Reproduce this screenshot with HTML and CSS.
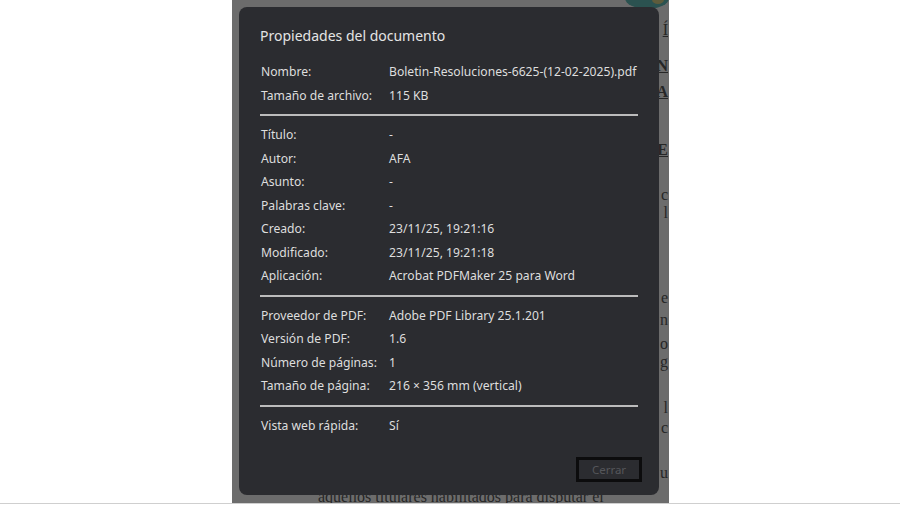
FILE: index.html
```html
<!DOCTYPE html>
<html lang="es">
<head>
<meta charset="utf-8">
<title>Propiedades del documento</title>
<link rel="stylesheet" href="styles.css">
</head>
<body>
<div class="screen">
  <div class="viewer">
    <svg class="logo" width="44" height="12" viewBox="0 0 44 12" aria-hidden="true">
      <ellipse cx="22" cy="-2" rx="22" ry="11" fill="#2b5250"/>
      <ellipse cx="33" cy="0" rx="6" ry="4" fill="#5e5c3c"/>
    </svg>
    <div class="page">
      <div class="ln ul">Í</div>
      <div class="ln ul b">N</div>
      <div class="ln ul b">A</div>
      <div class="ln ul b">E</div>
      <div class="ln">c</div>
      <div class="ln">l</div>
      <div class="ln">e</div>
      <div class="ln">n</div>
      <div class="ln">o</div>
      <div class="ln">g</div>
      <div class="ln">l</div>
      <div class="ln">c</div>
      <div class="ln">u</div>
      <div class="ln full">aquellos titulares habilitados para disputar el</div>
    </div>
    <div class="dialog" role="dialog" aria-label="Propiedades del documento">
      <h1 class="title">Propiedades del documento</h1>
      <dl class="props">
        <dt>Nombre:</dt><dd>Boletin-Resoluciones-6625-(12-02-2025).pdf</dd>
        <dt>Tamaño de archivo:</dt><dd>115 KB</dd>
      </dl>
      <hr class="sep">
      <dl class="props">
        <dt>Título:</dt><dd>-</dd>
        <dt>Autor:</dt><dd>AFA</dd>
        <dt>Asunto:</dt><dd>-</dd>
        <dt>Palabras clave:</dt><dd>-</dd>
        <dt>Creado:</dt><dd>23/11/25, 19:21:16</dd>
        <dt>Modificado:</dt><dd>23/11/25, 19:21:18</dd>
        <dt>Aplicación:</dt><dd>Acrobat PDFMaker 25 para Word</dd>
      </dl>
      <hr class="sep">
      <dl class="props">
        <dt>Proveedor de PDF:</dt><dd>Adobe PDF Library 25.1.201</dd>
        <dt>Versión de PDF:</dt><dd>1.6</dd>
        <dt>Número de páginas:</dt><dd>1</dd>
        <dt>Tamaño de página:</dt><dd>216 × 356 mm (vertical)</dd>
      </dl>
      <hr class="sep">
      <dl class="props">
        <dt>Vista web rápida:</dt><dd>Sí</dd>
      </dl>
      <div class="actions">
        <button class="btn" type="button">Cerrar</button>
      </div>
    </div>
  </div>
  <div class="bottom-rule"></div>
</div>
</body>
</html>
```

FILE: styles.css
```css
html, body {
  margin: 0;
  padding: 0;
  background: #ffffff;
}

.screen {
  width: 900px;
  height: 505px;
  overflow: hidden;
}

.viewer {
  position: relative;
  margin-left: 232px;
  width: 437px;
  height: 503px;
  background: #6c6c6c;
  overflow: hidden;
}

.bottom-rule {
  height: 1px;
  background: #cfcfcf;
}

.logo {
  position: absolute;
  right: 0;
  top: 0;
}

.page {
  display: grid;
  grid-template-rows: 36px 26px 58px 45px 18px 85px 22px 24px 18px 46px 20px 45px 24px 18px;
  padding-top: 21px;
  padding-left: 86px;
  width: 350px;
  font-family: "Liberation Serif", "DejaVu Serif", serif;
  font-size: 16px;
  line-height: 18px;
  color: #262626;
}

.ln {
  white-space: nowrap;
  text-align: right;
}

.ln.full {
  text-align: left;
}

.ul {
  text-decoration: underline;
}

.b {
  font-weight: bold;
}

.dialog {
  position: absolute;
  left: 7px;
  top: 7px;
  width: 420px;
  height: 488px;
  box-sizing: border-box;
  padding: 19px 21px 16px 21px;
  background: #2b2c30;
  border-radius: 8px;
  font-family: "Noto Sans", "Open Sans", sans-serif;
  color: #dedede;
  display: flex;
  flex-direction: column;
}

.title {
  margin: 0 0 14px 0;
  font-size: 14px;
  font-weight: normal;
  line-height: 20px;
  color: #e4e4e4;
}

.props {
  margin: 0;
  padding-left: 1px;
  display: grid;
  grid-template-columns: 128px 1fr;
  grid-auto-rows: 23.5px;
  align-items: center;
  font-size: 12.15px;
}

.props dt,
.props dd {
  margin: 0;
  white-space: nowrap;
}

.sep {
  margin: 7px 0;
  border: 0;
  height: 2px;
  background: #bcbcbc;
}

.actions {
  margin-top: auto;
  display: flex;
  justify-content: flex-end;
}

.btn {
  width: 60px;
  height: 19px;
  margin-right: -1px;
  padding: 0;
  background: #2b2c30;
  border: 0;
  outline: 3px solid #0c0c0d;
  color: #55565a;
  font-family: "Noto Sans", "Open Sans", sans-serif;
  font-size: 11.5px;
}
```
